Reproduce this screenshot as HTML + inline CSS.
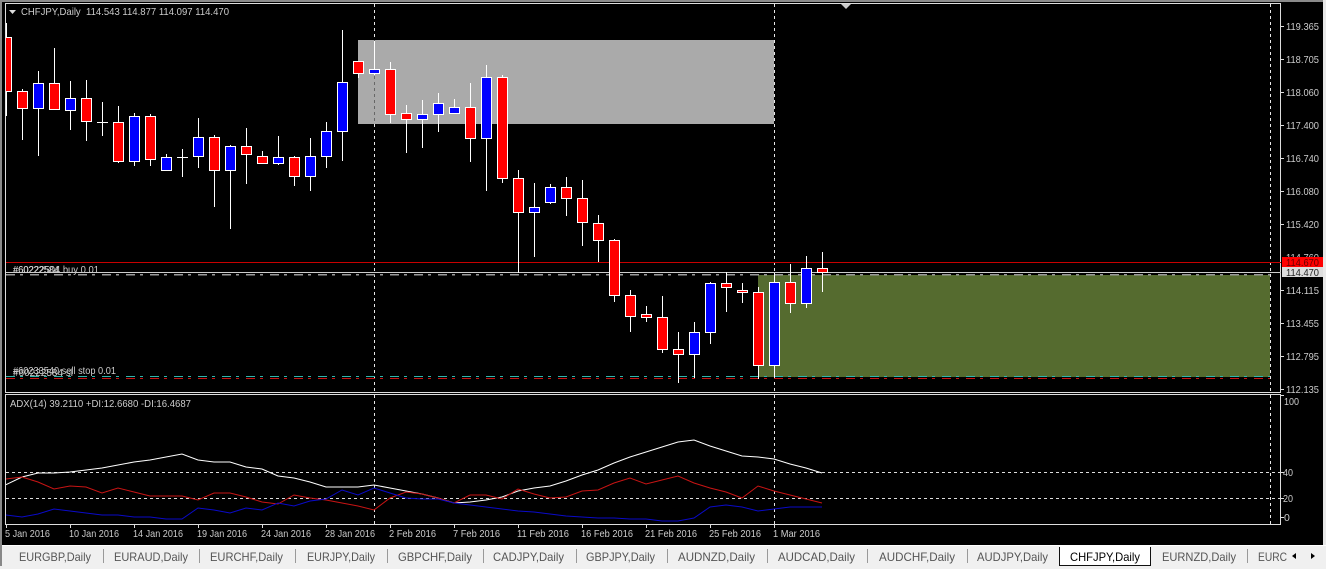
<!DOCTYPE html>
<html><head><meta charset="utf-8"><style>
html,body{margin:0;padding:0;background:#000;width:1326px;height:569px;overflow:hidden}
svg{display:block}
text{font-family:"Liberation Sans",sans-serif}
.p text{font-size:10.5px;fill:#ccc}
.t text{font-size:12px;fill:#555}
</style></head><body>
<svg width="1326" height="569" viewBox="0 0 1326 569" xmlns="http://www.w3.org/2000/svg">
<defs><clipPath id="c"><rect x="6" y="4" width="1275" height="389"/></clipPath></defs>
<rect width="1326" height="569" fill="#000"/>
<rect x="0" y="0" width="1326" height="2" fill="#8a8a8a"/>
<rect x="0" y="0" width="2" height="545" fill="#8a8a8a"/>
<rect x="1323" y="0" width="3" height="545" fill="#e8e8e8"/>
<rect x="358" y="40" width="416" height="84" fill="#aaa"/>
<rect x="758" y="275" width="512" height="102" fill="#556b2f"/>
<g fill="none" stroke="#ddd" stroke-width="1">
<path d="M5.5 3.500H1280.500V392.500H5.500Z"/>
<path d="M5.5 394.500H1280.500V524.500H5.500Z"/>
</g>
<path d="M374.500 4V393M774.500 4V393M1270.500 4V393M374.500 395V524M774.500 395V524M1270.500 395V524" stroke="#e8e8e8" stroke-dasharray="3 3" fill="none"/>
<path d="M374.500 40V124" stroke="#666" stroke-dasharray="3 3" fill="none"/>
<path d="M6 262.500H1281" stroke="#c80000"/>
<path d="M6 272.500H1281" stroke="#ccc"/>
<path d="M6 274.750H1270" stroke="#999" stroke-width="1.500" stroke-dasharray="9 5 3 7"/>
<path d="M6 376.500H1270" stroke="#2fb5ac" stroke-dasharray="9 5 3 7"/>
<path d="M6 378.500H1270" stroke="#c81414" stroke-dasharray="9 5 3 7"/>
<g clip-path="url(#c)">
<path fill="none" stroke="#fff" d="M6.500 23V116M22.500 89V140M38.500 71V156M54.500 48V109M70.500 81V130M86.500 80V141M102.500 102V136M118.500 106V163M134.500 113V166M150.500 114V166M166.500 154V171M182.500 149V177M198.500 118V168M214.500 135V207M230.500 145V229M246.500 128V184M262.500 151V164M278.500 136V165M294.500 156V186M310.500 138V191M326.500 122V168M342.500 30V161M358.500 61V78M374.500 41V75M390.500 62V123M406.500 105V153M422.500 100V148M438.500 93V132M454.500 99V113M470.500 83V162M486.500 65V191M502.500 75V183M518.500 170V273M534.500 183V257M550.500 184V204M566.500 177V216M582.500 180V246M598.500 215V262M614.500 239V302M630.500 290V332M646.500 306V322M662.500 296V353M678.500 332V383M694.500 322V378M710.500 282V344M726.500 272V312M742.500 283V303M758.500 287V379M774.500 273V377M790.500 264V313M806.500 256V308M822.500 252V292M97 122.500H108M177 157.500H188"/>
<path fill="#f00" stroke="#fff" d="M1.500 37.500h10v54h-10zM17.500 91.500h10v17h-10zM49.500 83.500h10v26h-10zM81.500 98.500h10v23h-10zM113.500 122.500h10v39h-10zM145.500 116.500h10v43h-10zM209.500 137.500h10v33h-10zM241.500 146.500h10v8h-10zM257.500 156.500h10v7h-10zM289.500 157.500h10v19h-10zM353.500 61.500h10v12h-10zM385.500 69.500h10v45h-10zM401.500 113.500h10v6h-10zM465.500 107.500h10v31h-10zM497.500 77.500h10v101h-10zM513.500 178.500h10v34h-10zM561.500 187.500h10v11h-10zM577.500 198.500h10v24h-10zM593.500 223.500h10v17h-10zM609.500 240.500h10v55h-10zM625.500 295.500h10v21h-10zM641.500 314.500h10v3h-10zM657.500 317.500h10v32h-10zM673.500 349.500h10v5h-10zM721.500 283.500h10v4h-10zM737.500 290.500h10v2h-10zM753.500 292.500h10v73h-10zM785.500 282.500h10v21h-10zM817.500 268.500h10v4h-10z"/>
<path fill="#00f" stroke="#fff" d="M33.500 83.500h10v25h-10zM65.500 98.500h10v12h-10zM129.500 116.500h10v45h-10zM161.500 157.500h10v13h-10zM193.500 137.500h10v19h-10zM225.500 146.500h10v24h-10zM273.500 157.500h10v6h-10zM305.500 156.500h10v20h-10zM321.500 131.500h10v25h-10zM337.500 82.500h10v49h-10zM369.500 69.500h10v4h-10zM417.500 114.500h10v5h-10zM433.500 103.500h10v11h-10zM449.500 107.500h10v6h-10zM481.500 77.500h10v61h-10zM529.500 207.500h10v5h-10zM545.500 187.500h10v15h-10zM689.500 332.500h10v22h-10zM705.500 283.500h10v49h-10zM769.500 282.500h10v83h-10zM801.500 268.500h10v35h-10z"/>
</g>
<path d="M6 472.500H1281M6 498.500H1281" stroke="#ddd" stroke-dasharray="3 3" fill="none"/>
<polyline fill="none" stroke="#fff" points="6,484.700 22,477 38,473 54,473 70,472 86,470 102,468 118,465 134,462 150,460 166,457 182,454 198,460 214,462 230,462 246,467 262,469 278,476 294,478 310,482 326,487 342,487 358,487 374,485 390,488 406,491 422,494 438,498 454,503 470,502 486,500 502,497 518,491 534,488 550,486 566,481 582,475 598,470 614,463 630,457 646,452 662,447 678,442 694,440 710,446 726,451 742,456 758,457 774,459 790,464 806,468 822,473"/>
<polyline fill="none" stroke="#c81414" points="6,479 22,477 38,482 54,489 70,486 86,487 102,493 118,488 134,492 150,496 166,496 182,496 198,500 214,493 230,493 246,497 262,502 278,504 294,495 310,498 326,500 342,503 358,506 374,510 390,498 406,492 422,494 438,498 454,503 470,495 486,495 502,499 518,489 534,494 550,498 566,497 582,491 598,490 614,483 630,478 646,484 662,480 678,476 694,483 710,488 726,492 742,498 758,486 774,491 790,495 806,499 822,503"/>
<polyline fill="none" stroke="#0a0ac8" points="6,515 22,517 38,514 54,509 70,511 86,513 102,515 118,515 134,517 150,517 166,519 182,519 198,508 214,510 230,513 246,508 262,510 278,503 294,506 310,501 326,499 342,490 358,495 374,488 390,493 406,498 422,499 438,499 454,503 470,505 486,507 502,509 518,511 534,512 550,514 566,516 582,517 598,518 614,518 630,519 646,519 662,521 678,521 694,518 710,507 726,505 742,507 758,511 774,509 790,507 806,507 822,507"/>
<path d="M841 4H851L846 9Z" fill="#ccc"/>
<path d="M9 10H16L12.500 14Z" fill="#ddd"/>
<g class="p">
<text x="21" y="15" textLength="208" lengthAdjust="spacingAndGlyphs" xml:space="preserve">CHFJPY,Daily  114.543 114.877 114.097 114.470</text>
<text x="13" y="273" textLength="86" lengthAdjust="spacingAndGlyphs">#60222504 buy 0.01</text>
<text x="13" y="273" textLength="46" lengthAdjust="spacingAndGlyphs">#60222584</text>
<text x="13" y="374" textLength="103" lengthAdjust="spacingAndGlyphs">#60233540 sell stop 0.01</text>
<text x="13" y="376" textLength="60" lengthAdjust="spacingAndGlyphs">#60222584 sl</text>
<text x="10" y="407" textLength="181" lengthAdjust="spacingAndGlyphs">ADX(14) 39.2110 +DI:12.6680 -DI:16.4687</text>
<text x="1286" y="30" textLength="33" lengthAdjust="spacingAndGlyphs">119.365</text>
<text x="1286" y="63" textLength="33" lengthAdjust="spacingAndGlyphs">118.705</text>
<text x="1286" y="96" textLength="33" lengthAdjust="spacingAndGlyphs">118.060</text>
<text x="1286" y="129" textLength="33" lengthAdjust="spacingAndGlyphs">117.400</text>
<text x="1286" y="162" textLength="33" lengthAdjust="spacingAndGlyphs">116.740</text>
<text x="1286" y="195" textLength="33" lengthAdjust="spacingAndGlyphs">116.080</text>
<text x="1286" y="228" textLength="33" lengthAdjust="spacingAndGlyphs">115.420</text>
<text x="1286" y="261" textLength="33" lengthAdjust="spacingAndGlyphs">114.760</text>
<text x="1286" y="294" textLength="33" lengthAdjust="spacingAndGlyphs">114.115</text>
<text x="1286" y="327" textLength="33" lengthAdjust="spacingAndGlyphs">113.455</text>
<text x="1286" y="360" textLength="33" lengthAdjust="spacingAndGlyphs">112.795</text>
<text x="1286" y="393" textLength="33" lengthAdjust="spacingAndGlyphs">112.135</text>
<text x="1284" y="405" textLength="15" lengthAdjust="spacingAndGlyphs">100</text>
<text x="1283" y="476" textLength="10" lengthAdjust="spacingAndGlyphs">40</text>
<text x="1283" y="502" textLength="10" lengthAdjust="spacingAndGlyphs">20</text>
<text x="1284" y="521">0</text>
<text x="5" y="537" textLength="45" lengthAdjust="spacingAndGlyphs">5 Jan 2016</text>
<text x="69" y="537" textLength="50" lengthAdjust="spacingAndGlyphs">10 Jan 2016</text>
<text x="133" y="537" textLength="50" lengthAdjust="spacingAndGlyphs">14 Jan 2016</text>
<text x="197" y="537" textLength="50" lengthAdjust="spacingAndGlyphs">19 Jan 2016</text>
<text x="261" y="537" textLength="50" lengthAdjust="spacingAndGlyphs">24 Jan 2016</text>
<text x="325" y="537" textLength="50" lengthAdjust="spacingAndGlyphs">28 Jan 2016</text>
<text x="389" y="537" textLength="47" lengthAdjust="spacingAndGlyphs">2 Feb 2016</text>
<text x="453" y="537" textLength="47" lengthAdjust="spacingAndGlyphs">7 Feb 2016</text>
<text x="517" y="537" textLength="52" lengthAdjust="spacingAndGlyphs">11 Feb 2016</text>
<text x="581" y="537" textLength="52" lengthAdjust="spacingAndGlyphs">16 Feb 2016</text>
<text x="645" y="537" textLength="52" lengthAdjust="spacingAndGlyphs">21 Feb 2016</text>
<text x="709" y="537" textLength="52" lengthAdjust="spacingAndGlyphs">25 Feb 2016</text>
<text x="773" y="537" textLength="47" lengthAdjust="spacingAndGlyphs">1 Mar 2016</text>
</g>
<path stroke="#ddd" d="M1281 26.500h3M1281 59.500h3M1281 92.500h3M1281 125.500h3M1281 158.500h3M1281 191.500h3M1281 224.500h3M1281 290.500h3M1281 323.500h3M1281 356.500h3M1281 389.500h3M1281 395.500h3M1281 472.500h3M1281 498.500h3M1281 517.500h3M6.500 525v3M70.500 525v3M134.500 525v3M198.500 525v3M262.500 525v3M326.500 525v3M390.500 525v3M454.500 525v3M518.500 525v3M582.500 525v3M646.500 525v3M710.500 525v3M774.500 525v3"/>
<rect x="1282" y="257" width="41" height="10" fill="#f00"/>
<text x="1286" y="266" font-size="10.500" fill="#600" textLength="33" lengthAdjust="spacingAndGlyphs">114.670</text>
<rect x="1282" y="267" width="41" height="10" fill="#ddd"/>
<text x="1286" y="276" font-size="10.500" fill="#222" textLength="33" lengthAdjust="spacingAndGlyphs">114.470</text>
<rect x="0" y="545" width="1326" height="24" fill="#f0f0f0"/>
<rect x="0" y="545" width="1326" height="1" fill="#fff"/>
<rect x="0" y="545" width="2" height="21" fill="#888"/>
<path stroke="#999" d="M103.500 549V563M199.500 549V563M295.500 549V563M387.500 549V563M483.500 549V563M576.500 549V563M667.500 549V563M767.500 549V563M867.500 549V563M967.500 549V563M1247.500 549V563"/>
<path d="M1059.500 547V565.500H1150.500V547" fill="#fff" stroke="#111"/>
<rect x="1060" y="545" width="90" height="20" fill="#fff"/>
<g class="t">
<text x="19" y="561" textLength="72" lengthAdjust="spacingAndGlyphs">EURGBP,Daily</text>
<text x="114" y="561" textLength="74" lengthAdjust="spacingAndGlyphs">EURAUD,Daily</text>
<text x="210" y="561" textLength="73" lengthAdjust="spacingAndGlyphs">EURCHF,Daily</text>
<text x="307" y="561" textLength="68" lengthAdjust="spacingAndGlyphs">EURJPY,Daily</text>
<text x="398" y="561" textLength="74" lengthAdjust="spacingAndGlyphs">GBPCHF,Daily</text>
<text x="493" y="561" textLength="71" lengthAdjust="spacingAndGlyphs">CADJPY,Daily</text>
<text x="586" y="561" textLength="69" lengthAdjust="spacingAndGlyphs">GBPJPY,Daily</text>
<text x="678" y="561" textLength="77" lengthAdjust="spacingAndGlyphs">AUDNZD,Daily</text>
<text x="778" y="561" textLength="77" lengthAdjust="spacingAndGlyphs">AUDCAD,Daily</text>
<text x="879" y="561" textLength="76" lengthAdjust="spacingAndGlyphs">AUDCHF,Daily</text>
<text x="977" y="561" textLength="71" lengthAdjust="spacingAndGlyphs">AUDJPY,Daily</text>
<text x="1070" y="561" textLength="70" lengthAdjust="spacingAndGlyphs" style="fill:#000">CHFJPY,Daily</text>
<text x="1162" y="561" textLength="74" lengthAdjust="spacingAndGlyphs">EURNZD,Daily</text>
<text x="1258" y="561" textLength="29" lengthAdjust="spacingAndGlyphs">EURC</text>
</g>
<path d="M1296 553V559L1292 556ZM1311 553V559L1315 556Z" fill="#000"/>
</svg>
</body></html>
